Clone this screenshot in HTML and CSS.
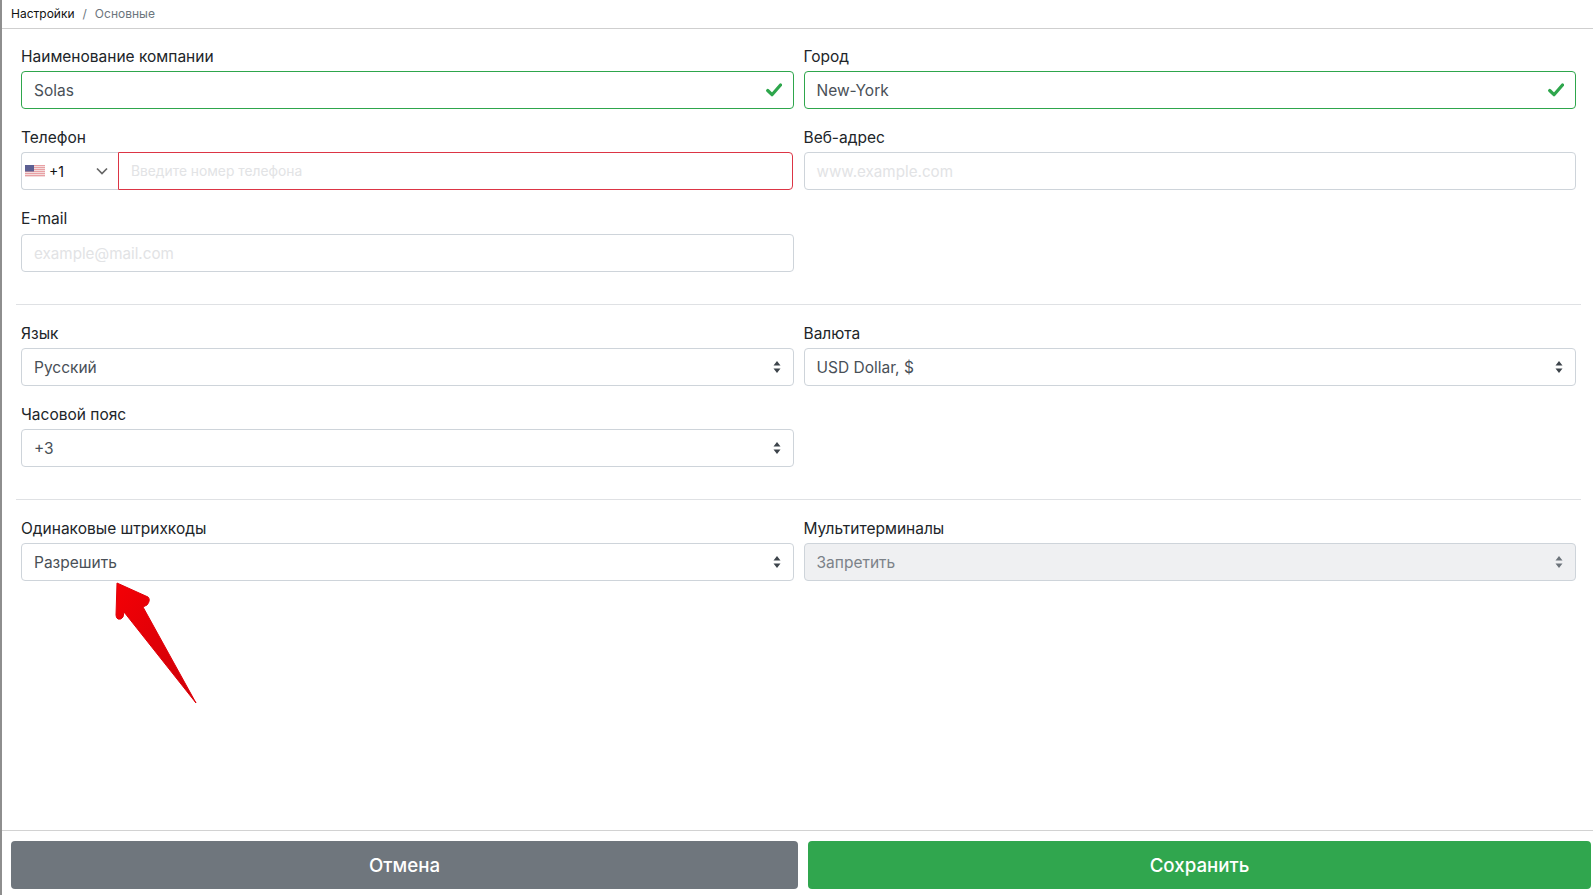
FILE: index.html
```html
<!DOCTYPE html>
<html lang="ru">
<head>
<meta charset="utf-8">
<title>Настройки</title>
<link rel="stylesheet" href="styles.css">
</head>
<body>
<div class="app">
  <nav class="crumbs"><span class="crumb-root">Настройки</span><span class="crumb-sep">/</span><span class="crumb-cur">Основные</span></nav>
  <main class="content">
    <section class="section">
      <div class="grid">
        <div class="field"><label class="label">Наименование компании</label>
          <div class="control valid"><span class="value">Solas</span>
            <svg class="check" viewBox="0 0 16 14"><path d="M1.7 7.5 6 11.7 14.5 2" fill="none" stroke="#2ea64c" stroke-width="3.2" stroke-linecap="round" stroke-linejoin="round"/></svg></div></div>
        <div class="field"><label class="label">Город</label>
          <div class="control valid"><span class="value">New-York</span>
            <svg class="check" viewBox="0 0 16 14"><path d="M1.7 7.5 6 11.7 14.5 2" fill="none" stroke="#2ea64c" stroke-width="3.2" stroke-linecap="round" stroke-linejoin="round"/></svg></div></div>
        <div class="field"><label class="label">Телефон</label>
          <div class="phone">
            <div class="dial">
              <svg class="flag" viewBox="0 0 20 12"><rect width="20" height="12" fill="#e8a0a4"/><path d="M0 1.5h20M0 3.5h20M0 5.5h20M0 7.5h20M0 9.5h20M0 11.5h20" stroke="#f3dcdc" stroke-width="1"/><rect width="9" height="6.5" fill="#5c5f92"/></svg>
              <span class="dial-code">+1</span>
              <svg class="chev" viewBox="0 0 12 8"><path d="M1 1.5 6 6.5 11 1.5" fill="none" stroke="#666" stroke-width="1.7"/></svg>
            </div>
            <div class="control invalid"><span class="hint small">Введите номер телефона</span></div>
          </div></div>
        <div class="field"><label class="label">Веб-адрес</label>
          <div class="control"><span class="hint">www.example.com</span></div></div>
        <div class="field"><label class="label tall">E-mail</label>
          <div class="control"><span class="hint">example@mail.com</span></div></div>
      </div>
    </section>
    <section class="section">
      <div class="grid">
        <div class="field"><label class="label">Язык</label>
          <div class="control"><span class="value">Русский</span>
            <svg class="updown" viewBox="0 0 8 12"><path d="M4 0 7.5 4.6H.5zM4 12 .5 7.4h7z" fill="#3d444b"/></svg></div></div>
        <div class="field"><label class="label">Валюта</label>
          <div class="control"><span class="value">USD Dollar, $</span>
            <svg class="updown" viewBox="0 0 8 12"><path d="M4 0 7.5 4.6H.5zM4 12 .5 7.4h7z" fill="#3d444b"/></svg></div></div>
        <div class="field"><label class="label">Часовой пояс</label>
          <div class="control"><span class="value">+3</span>
            <svg class="updown" viewBox="0 0 8 12"><path d="M4 0 7.5 4.6H.5zM4 12 .5 7.4h7z" fill="#3d444b"/></svg></div></div>
      </div>
    </section>
    <section class="section last">
      <div class="grid">
        <div class="field"><label class="label">Одинаковые штрихкоды</label>
          <div class="control"><span class="value">Разрешить</span>
            <svg class="updown" viewBox="0 0 8 12"><path d="M4 0 7.5 4.6H.5zM4 12 .5 7.4h7z" fill="#3d444b"/></svg></div></div>
        <div class="field"><label class="label">Мультитерминалы</label>
          <div class="control disabled"><span class="value">Запретить</span>
            <svg class="updown" viewBox="0 0 8 12"><path d="M4 0 7.5 4.6H.5zM4 12 .5 7.4h7z" fill="#6c737a"/></svg></div></div>
      </div>
    </section>
  </main>
  <footer class="actions">
    <button class="btn cancel" type="button">Отмена</button>
    <button class="btn save" type="button">Сохранить</button>
  </footer>
  <svg class="arrow" viewBox="0 0 90 130">
    <defs><linearGradient id="arrowfill" x1="0" y1="0" x2="1" y2="1"><stop offset="0" stop-color="#f40006"/><stop offset="1" stop-color="#cc0008"/></linearGradient></defs>
    <path d="M2 1 L33 15 Q36 18 32 23 L28 25 L81 121 L9 30 L8 35 Q6 38 3 37 Q1 36 1 33 Z" fill="url(#arrowfill)" stroke="#e00008" stroke-width="1" stroke-linejoin="round"/>
  </svg>
</div>
</body>
</html>
```
FILE: styles.css
```css
* { box-sizing: border-box; }
html, body { margin: 0; height: 100%; }
body { font-family: Inter, "Liberation Sans", sans-serif; color: #212529; background: #fff; overflow: hidden; }
.app { position: relative; height: 895px; display: flex; flex-direction: column; border-left: 2px solid #8e8e8e; }
.crumbs { height: 29px; flex: none; border-bottom: 1px solid #cfcfcf; padding: 0 0 2px 9px; display: flex; align-items: center; font-size: 12px; }
.crumb-root { color: #111; }
.crumb-sep { color: #6c757d; margin: 0 8px; }
.crumb-cur { color: #6c757d; }
.content { flex: 1; padding: 0 12px 0 14px; min-height: 0; }
.section { padding: 16px 0 0; height: 276px; border-bottom: 1px solid #dfe1e4; }
.section + .section { height: 195px; padding-top: 17px; }
.section.last { border-bottom: 0; padding-top: 17px; }
.grid { display: grid; grid-template-columns: 1fr 1fr; column-gap: 10px; row-gap: 17px; padding: 0 5px; }
.field { min-width: 0; }
.label { display: block; font-size: 15.5px; line-height: 24px; margin-bottom: 2px; }
.label.tall { margin-bottom: 3px; }
.control { height: 38px; border: 1px solid #ced4da; border-radius: 4px; padding: 0 12px; display: flex; align-items: center; justify-content: space-between; background: #fff; font-size: 15.5px; flex: 1; min-width: 0; }
.value { color: #495057; }
.hint { color: #e2e3e5; font-size: 15.2px; }
.hint.small { font-size: 13.8px; }
.valid { border-color: #2ea64c; }
.invalid { border-color: #dc3545; border-radius: 0 4px 4px 0; }
.disabled { background: #eff0f2; }
.disabled .value { color: #7c8289; }
.check { width: 16px; height: 14px; margin-right: -1px; }
.updown { width: 8px; height: 12px; margin-right: 0; }
.phone { display: flex; margin-right: 1px; }
.dial { flex: none; width: 97px; height: 38px; border: 1px solid #ced4da; border-right: 0; border-radius: 4px 0 0 4px; display: flex; align-items: center; padding: 0 10px 0 3px; font-size: 14px; color: #111; }
.flag { width: 20px; height: 12px; }
.dial-code { margin-left: 4px; flex: 1; }
.chev { width: 12px; height: 8px; }
.actions { flex: none; height: 65px; border-top: 1px solid #d2d2d2; padding: 10px 2px 6px 9px; display: grid; grid-template-columns: 787fr 783fr; column-gap: 10px; }
.btn { min-width: 0; height: 48px; border: 0; border-radius: 4px; color: #fff; font: 500 18.7px Inter, "Liberation Sans", sans-serif; }
.cancel { background: #6f767d; }
.save { background: #30a64e; }
.arrow { position: absolute; left: 113px; top: 582px; width: 90px; height: 130px; }
```
